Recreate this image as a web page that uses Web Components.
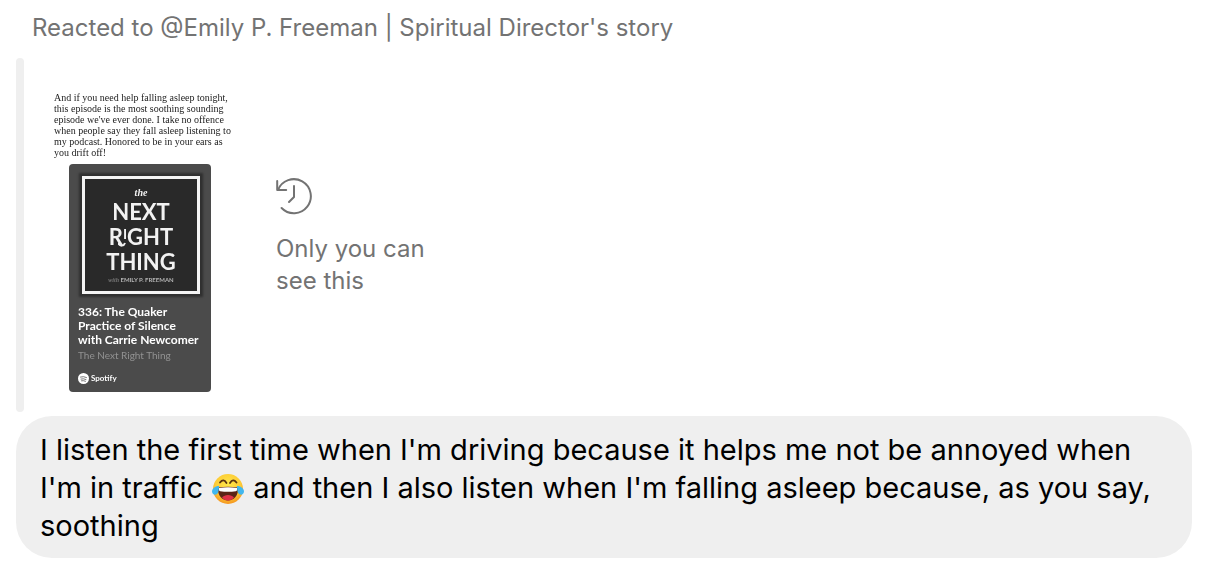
<!DOCTYPE html>
<html lang="en">
<head>
<meta charset="utf-8">
<meta name="viewport" content="width=device-width, initial-scale=1">
<title>Story reaction</title>
<style>
  body {
    margin: 0;
    background: #fff;
    color: #000;
    font-family: Inter, "Liberation Sans", sans-serif;
  }
</style>
</head>
<body>
<story-thread>
  <span slot="title">Reacted to @Emily P. Freeman | Spiritual Director's story</span>
  <story-preview slot="story">
    <story-card slot="image">
      <span slot="caption">And if you need help falling asleep tonight,<br>this episode is the most soothing sounding<br>episode we've ever done. I take no offence<br>when people say they fall asleep listening to<br>my podcast. Honored to be in your ears as<br>you drift off!</span>
      <podcast-cover slot="cover"></podcast-cover>
      <span slot="episode">336: The Quaker<br>Practice of Silence<br>with Carrie Newcomer</span>
      <span slot="show">The Next Right Thing</span>
    </story-card>
    <span slot="note">Only you can see this</span>
  </story-preview>
  <message-bubble>I listen the first time when I'm driving because it helps me not be annoyed when I'm in traffic <joy-emoji></joy-emoji> and then I also listen when I'm falling asleep because, as you say, soothing</message-bubble>
</story-thread>

<script>
'use strict';

class BaseElement extends HTMLElement {
  constructor() {
    super();

    const template = document.createElement('template');
    template.innerHTML = this.constructor.markup;

    this.attachShadow({ mode: 'open' });
    this.shadowRoot.appendChild(template.content.cloneNode(true));
  }
}

class StoryThread extends BaseElement {
  static markup = `
    <style>
      :host {
        display: block;
        padding: 12px 18px 22px 16px;
      }

      header {
        padding: 0 16px;
        margin-bottom: 14px;
        color: #737373;
        font-size: 24px;
        line-height: 32px;
      }
    </style>

    <header><slot name="title"></slot></header>
    <slot name="story"></slot>
    <slot></slot>
  `;
}

class StoryPreview extends BaseElement {
  static markup = `
    <style>
      :host {
        display: flex;
        align-items: stretch;
        margin-bottom: 4px;
      }

      .bar {
        flex: none;
        width: 8px;
        border-radius: 4px;
        background: #efefef;
      }

      .image {
        flex: none;
        width: 200px;
        margin: 0 36px 0 16px;
      }

      .note {
        display: flex;
        flex-direction: column;
        justify-content: center;
        gap: 18px;
        max-width: 160px;
        padding-top: 4px;
        color: #737373;
        font-size: 24px;
        line-height: 32px;
      }

      svg {
        display: block;
        width: 38px;
        height: 38px;
      }
    </style>

    <div class="bar"></div>
    <div class="image"><slot name="image"></slot></div>
    <div class="note">
      <svg viewBox="0 0 38 38" fill="none" stroke="#737373" stroke-width="2" stroke-linecap="round" stroke-linejoin="round" aria-hidden="true">
        <path d="M2 13A17 17 0 1 1 5.600 31"/>
        <path d="M1.200 4v9h9"/>
        <path d="M18 9v11l-5 5"/>
      </svg>
      <slot name="note"></slot>
    </div>
  `;
}

class StoryCard extends BaseElement {
  static markup = `
    <style>
      :host {
        display: block;
        padding: 34px 0 20px;
        filter: blur(0.5px);
      }

      .caption {
        margin: 0 0 6px 14px;
        color: #222;
        font-family: "Liberation Serif", serif;
        font-size: 10px;
        line-height: 11px;
        white-space: nowrap;
      }

      .card {
        width: 124px;
        height: 206px;
        margin: 0 29px;
        padding: 12px 9px 10px;
        border-radius: 4px;
        background: #4b4b4b;
        color: #fff;
        font-family: Lato, sans-serif;
      }

      .episode {
        margin: 11px 0 2px;
        font-size: 12px;
        font-weight: 700;
        line-height: 14px;
        white-space: nowrap;
      }

      .show {
        color: #929292;
        font-size: 10px;
        line-height: 12px;
      }

      .brand {
        display: flex;
        align-items: center;
        gap: 2px;
        margin-top: 11px;
        font-size: 8px;
        font-weight: 700;
        line-height: 12px;
      }

      svg {
        display: block;
        width: 11px;
        height: 11px;
      }
    </style>

    <div class="caption"><slot name="caption"></slot></div>
    <div class="card">
      <slot name="cover"></slot>
      <div class="episode"><slot name="episode"></slot></div>
      <div class="show"><slot name="show"></slot></div>
      <div class="brand">
        <svg viewBox="0 0 22 22" aria-hidden="true">
          <circle cx="11" cy="11" r="11" fill="#fff"/>
          <path d="M5 8q6-2 12 1M6 12q5-1.500 10 1M7 15.500q4-1 8 1" fill="none" stroke="#4b4b4b" stroke-width="1.500" stroke-linecap="round"/>
        </svg>
        <span>Spotify</span>
      </div>
    </div>
  `;
}

class PodcastCover extends BaseElement {
  static markup = `
    <style>
      :host {
        display: block;
        box-sizing: border-box;
        height: 118px;
        margin: 0 2px 0 4px;
        border: 3px solid #f4f4f4;
        background: #292929;
        box-shadow: 0 0 2px 3px #303030;
        color: #f2f2f2;
        font-family: Lato, sans-serif;
        text-align: center;
      }

      .the {
        padding-top: 8px;
        font-family: "Liberation Serif", serif;
        font-size: 10px;
        font-style: italic;
        font-weight: 700;
        line-height: 12px;
      }

      .title {
        font-size: 22px;
        font-weight: 700;
        line-height: 25px;
      }

      .right {
        position: relative;
      }

      .small {
        font-size: 14px;
        vertical-align: 6px;
        line-height: 14px;
      }

      svg {
        position: absolute;
        left: 33px;
        top: 18px;
        width: 10px;
        height: 5px;
      }

      .author {
        font-size: 6px;
        font-weight: 700;
        line-height: 12px;
        color: #b5b5b5;
      }

      i {
        color: #777;
        font-family: "Liberation Serif", serif;
      }
    </style>

    <div class="the">the</div>
    <div class="title">NEXT</div>
    <div class="title right">R<span class="small">I</span>GHT
      <svg viewBox="0 0 10 5" fill="none" stroke="#f2f2f2" stroke-width="2" aria-hidden="true">
        <path d="M0 1c2 4 6 3 7 0"/>
      </svg>
    </div>
    <div class="title">THING</div>
    <div class="author"><i>with</i> EMILY P. FREEMAN</div>
  `;
}

class MessageBubble extends BaseElement {
  static markup = `
    <style>
      :host {
        display: block;
        padding: 15px 24px 13px;
        border-radius: 36px;
        background: #efefef;
        font-size: 29px;
        line-height: 38px;
      }
    </style>

    <slot></slot>
  `;
}

class JoyEmoji extends BaseElement {
  static markup = `
    <style>
      :host {
        display: inline-block;
        width: 34px;
        height: 32px;
        vertical-align: -7px;
      }

      svg {
        display: block;
        width: 100%;
        height: 100%;
      }
    </style>

    <svg viewBox="0 0 34 32" role="img" aria-label="😂">
      <defs>
        <radialGradient id="face" cx="50%" cy="35%" r="65%">
          <stop offset="0" stop-color="#ffe84a"/>
          <stop offset="0.650" stop-color="#fdcb35"/>
          <stop offset="1" stop-color="#f5951f"/>
        </radialGradient>
      </defs>
      <circle cx="17" cy="16" r="15" fill="url(#face)"/>
      <path d="M9 9.500q3.500-4.500 6.500.5M19 10q3-5 6.500-.5" fill="none" stroke="#5a3412" stroke-width="1.800" stroke-linecap="round"/>
      <path d="M7 14.500q10-1.500 20 0c.5 8-4 13-10 13S6.500 22.500 7 14.500z" fill="#5b2416"/>
      <path d="M8 15q9-1.500 18 0c.4 2-.2 3-1.200 3.200q-7.800 1.200-15.600 0C8.200 18 7.600 17 8 15z" fill="#fff"/>
      <path d="M11 24.500c2.500-3.500 9.500-3.500 12 0-1.500 2-3.500 3-6 3s-4.500-1-6-3z" fill="#df3146"/>
      <path d="M8 13C4 13 1 15.500 1 18.500c0 2 1.400 3.200 3 3.200 3.200 0 4-4 4-8.700z" fill="#41b7ee"/>
      <path d="M26 13c4 0 7 2.500 7 5.500 0 2-1.400 3.200-3 3.200-3.200 0-4-4-4-8.700z" fill="#41b7ee"/>
    </svg>
  `;
}

customElements.define('story-thread', StoryThread);
customElements.define('story-preview', StoryPreview);
customElements.define('story-card', StoryCard);
customElements.define('podcast-cover', PodcastCover);
customElements.define('message-bubble', MessageBubble);
customElements.define('joy-emoji', JoyEmoji);
</script>
</body>
</html>
